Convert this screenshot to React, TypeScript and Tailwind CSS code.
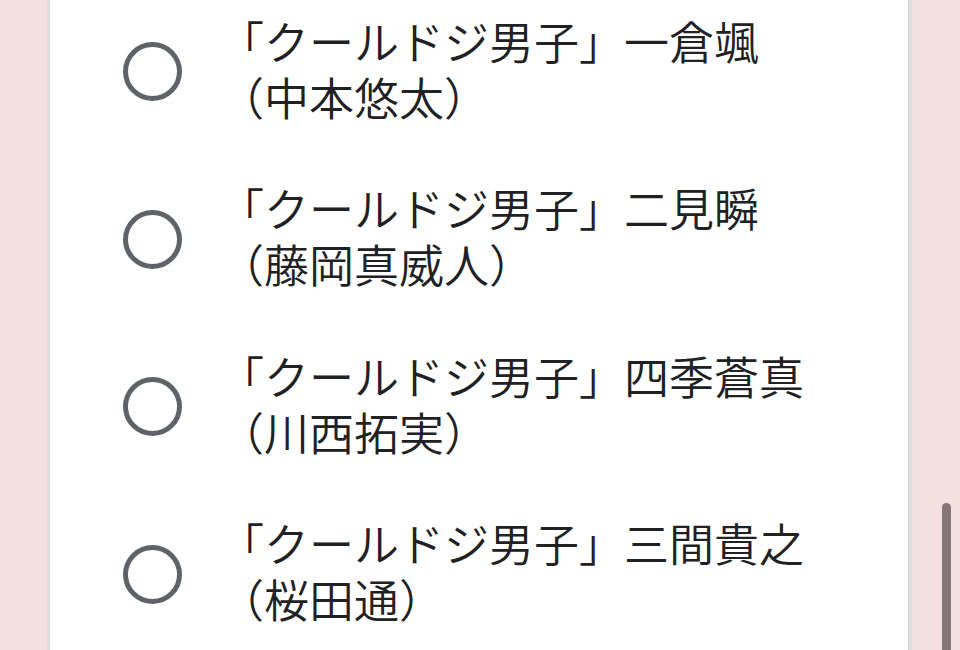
import React from "react";

const options = [
  { title: "「クールドジ男子」一倉颯", actor: "（中本悠太）" },
  { title: "「クールドジ男子」二見瞬", actor: "（藤岡真威人）" },
  { title: "「クールドジ男子」四季蒼真", actor: "（川西拓実）" },
  { title: "「クールドジ男子」三間貴之", actor: "（桜田通）" },
];

export default function App() {
  return (
    <div className="relative h-[650px] w-[960px] overflow-hidden bg-[#f5e0e1] font-['Noto_Sans_CJK_JP',sans-serif]">
      <div className="ml-[47px] flex h-full w-[864px] flex-col overflow-hidden border-x-[3px] border-[#dadce0] bg-white">
        <ul className="-mt-[12px]">
          {options.map((item, index) => (
            <li key={index} className="flex h-[167.5px] items-center">
              <div className="ml-[73px] size-[59px] shrink-0 rounded-full border-[5.5px] border-[#5f6368]" />
              <div className="mb-[6px] ml-[37px] text-[45px] font-[350] leading-[56px] text-[#202124]">
                <div>{item.title}</div>
                <div>{item.actor}</div>
              </div>
            </li>
          ))}
        </ul>
      </div>
      <div className="absolute left-[942px] top-[503px] h-[170px] w-[9px] rounded-full bg-[#857778]" />
    </div>
  );
}
